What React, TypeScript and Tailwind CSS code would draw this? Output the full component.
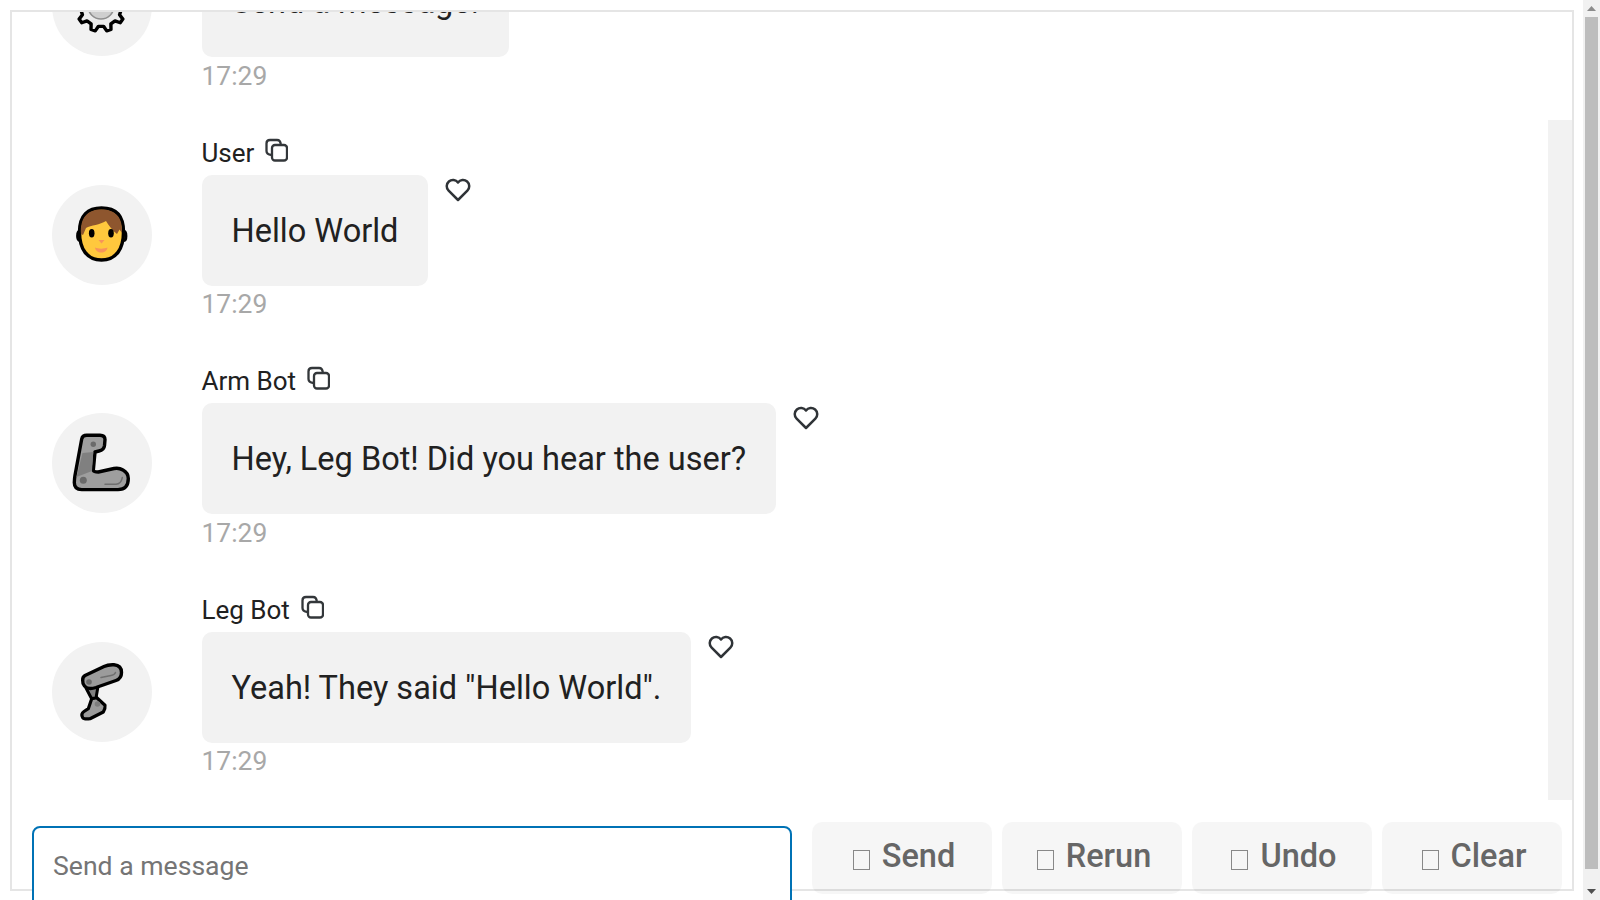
import React from "react";
import { TbHeart } from "react-icons/tb";

function gearPath(cx: number, cy: number, outer: number, inner: number, teeth: number) {
  const pts: string[] = [];
  const step = (Math.PI * 2) / teeth;
  for (let i = 0; i < teeth; i++) {
    const a = (i + 0.5) * step;
    const corners: [number, number][] = [
      [a - step * 0.3, inner],
      [a - step * 0.14, outer],
      [a + step * 0.14, outer],
      [a + step * 0.3, inner],
    ];
    corners.forEach(([t, r]) => {
      pts.push(`${(cx + Math.sin(t) * r).toFixed(2)} ${(cy + Math.cos(t) * r).toFixed(2)}`);
    });
  }
  return "M" + pts.join("L") + "Z";
}

function GearEmoji() {
  return (
    <svg width="60" height="60" viewBox="0 0 60 60">
      <path d={gearPath(29, 30, 25.5, 20.5, 10)} fill="#ececec" stroke="#000" strokeWidth="3.400" strokeLinejoin="round" />
      <circle cx="29" cy="30" r="13" fill="#cfcfcf" stroke="#8f8f8f" strokeWidth="1.500" />
    </svg>
  );
}

function BoyEmoji() {
  return (
    <svg width="60" height="60" viewBox="0 0 60 60">
      <ellipse cx="7.500" cy="31" rx="2" ry="4.500" fill="#FFC83D" stroke="#000" strokeWidth="2.800" />
      <ellipse cx="52" cy="31" rx="2" ry="4.500" fill="#FFC83D" stroke="#000" strokeWidth="2.800" />
      <path d="M7.500 27C7.500 10 16 3 29.500 3S51.500 10 51.500 27C51.500 44 44 55 29.500 55S7.500 44 7.500 27Z" fill="#FFC83D" stroke="#000" strokeWidth="3.400" />
      <path d="M9 29C8 12 16 4.500 29.500 4.500S51 12 50 28L47.500 24.500L45 29C41 26 37 21 34 16C28 20 19 20 14 23L11 30Z" fill="#8E562E" />
      <ellipse cx="19.700" cy="28.300" rx="2.800" ry="4.200" fill="#000" />
      <ellipse cx="39" cy="28.300" rx="2.800" ry="4.200" fill="#000" />
      <path d="M26.500 35H32.500L29.500 38.500Z" fill="#F7945A" />
      <path d="M23 42.500C26 44 32 44 35.500 42.500C35 46 32.500 47.500 29.300 47.500S23.500 46 23 42.500Z" fill="#F7945A" />
    </svg>
  );
}

function ArmEmoji() {
  return (
    <svg width="60" height="60" viewBox="0 0 60 60">
      <path
        d="M9.700 6Q10.500 2.300 14.700 2.300H28Q33 2.300 33 6.600L32.500 12.500Q32 17 27 18L23 19L21.300 37.300Q22 39 26.300 39L42 35.500Q47 34.500 51 37Q56.300 40 56.300 45.500Q56.300 56.600 46 56.600H9.700Q2.300 56.600 2.300 49.500Q2.500 45 3 42.300Z"
        fill="#9E9E9E"
        stroke="#000"
        strokeWidth="3.400"
        strokeLinejoin="round"
      />
      <path d="M10.500 20L21.300 19L20 38L4.500 44Z" fill="#808080" />
      <circle cx="11.300" cy="47.300" r="3.500" fill="#6A6A6A" />
      <circle cx="21.300" cy="11.300" r="2.700" fill="#6A6A6A" />
      <path d="M33 51.300H44Q49 51 50.300 44.600" fill="none" stroke="#6F6F6F" strokeWidth="1.500" strokeLinecap="round" />
    </svg>
  );
}

function LegEmoji() {
  return (
    <svg width="60" height="60" viewBox="0 0 60 60">
      <path
        d="M19.700 36.700L24 35L33 43.300Q33.500 47 31.300 50L18 56.700Q12 57.500 10.700 55.600Q8.500 52 12 49.500L16.300 46.700Z"
        fill="#9B9B9B"
        stroke="#000"
        strokeWidth="3.200"
        strokeLinejoin="round"
      />
      <path d="M14 26L26 24.500L24 36L19.500 36.500Z" fill="#808080" stroke="#000" strokeWidth="3" strokeLinejoin="round" />
      <path
        d="M10.700 18.300Q10.500 15 13 13.500L32 4.500Q36 2.500 42 2.800Q49.500 3.500 49.500 10.500Q49.500 16.500 44 18.500L24 25.500Q16 28 12.500 24Q10.500 22 10.700 18.300Z"
        fill="#9B9B9B"
        stroke="#000"
        strokeWidth="3.400"
        strokeLinejoin="round"
      />
      <circle cx="17" cy="20" r="2.800" fill="#6A6A6A" />
      <circle cx="25.500" cy="42" r="2.800" fill="#7D7D7D" />
      <path d="M29 15.500L39 13.500Q42.500 13 43.500 10.500" fill="none" stroke="#6F6F6F" strokeWidth="1.500" strokeLinecap="round" />
    </svg>
  );
}

function CopyIcon() {
  return (
    <svg width="24" height="24" viewBox="0 0 24 24" className="mb-[7px] ml-[10px]" fill="none" stroke="#33373a" strokeWidth="2.300">
      <rect x="8" y="7" width="15" height="15.500" rx="3" />
      <path d="M7.500 17Q2.500 16.500 2.500 13V5.500Q2.500 2 6 2H13Q16.500 2 16.800 6.500" />
    </svg>
  );
}

const messages = [
  { name: "System", text: "Send a message!", avatar: <GearEmoji /> },
  { name: "User", text: "Hello World", avatar: <BoyEmoji /> },
  { name: "Arm Bot", text: "Hey, Leg Bot! Did you hear the user?", avatar: <ArmEmoji /> },
  { name: "Leg Bot", text: 'Yeah! They said "Hello World".', avatar: <LegEmoji /> },
];

function Message({ name, text, avatar }: { name: string; text: string; avatar: React.ReactNode }) {
  return (
    <div className="mb-[35.500px] pl-[40px]">
      <div className="flex h-[44px] items-center pt-[1px] pl-[149.500px] text-[26px] text-[#212121]">
        <span>{name}</span>
        <CopyIcon />
      </div>
      <div className="flex items-end">
        <div className="mb-[1px] flex h-[100px] w-[100px] shrink-0 items-center justify-center rounded-full bg-[#f2f2f2]">
          {avatar}
        </div>
        <div className="ml-[49.500px] flex h-[111px] items-center rounded-[10px] bg-[#f2f2f2] px-[30px] pt-[2px] text-[32.500px] whitespace-nowrap text-[#212121]">
          {text}
        </div>
        <TbHeart className="ml-[14.500px] self-start text-[30px] text-[#2f3337]" />
      </div>
      <div className="flex h-[38px] items-center pt-[1px] pl-[149.500px] text-[26.400px] text-[#a8a8a8]">17:29</div>
    </div>
  );
}

function ActionButton({ label }: { label: string }) {
  return (
    <button className="flex h-[72px] w-[180px] items-center justify-center rounded-[10px] bg-black/[0.035] pb-[4px] pl-[4px] text-[32.500px] font-medium text-[#666666]">
      <span className="mt-[8px] mr-[12px] h-[20px] w-[17px] border border-[#888888]" />
      <span>{label}</span>
    </button>
  );
}

export default function App() {
  return (
    <div className="flex h-[900px] overflow-hidden bg-white font-[Roboto,sans-serif]">
      <div className="flex-1 pt-[10px] pl-[10px]">
        <div className="h-[881px] w-[1564px] border-2 border-[#e5e5e5]">
          <div className="flex h-[810px] overflow-hidden">
            <div className="-mt-[110px] flex-1">
              {messages.map((m) => (
                <Message key={m.text} name={m.name} text={m.text} avatar={m.avatar} />
              ))}
            </div>
            <div className="mt-[108px] h-[680px] w-[24px] bg-[#f2f2f2]" />
          </div>
          <div className="flex pl-[20px]">
            <div className="mt-[4px] mr-[20px] h-[100px] w-[760px] rounded-[8px] border-2 border-[#0072b5] bg-white px-[19px] pt-[22px] text-[26.600px] leading-[32px] text-[#757575]">
              Send a message
            </div>
            <div className="flex gap-[10px]">
              <ActionButton label="Send" />
              <ActionButton label="Rerun" />
              <ActionButton label="Undo" />
              <ActionButton label="Clear" />
            </div>
          </div>
        </div>
      </div>
      <div className="flex h-[900px] w-[17px] flex-col items-center bg-[#f1f1f1]">
        <div className="flex h-[17px] items-center justify-center">
          <svg width="9" height="5" viewBox="0 0 9 5">
            <path d="M4.500 0L9 5H0Z" fill="#8c8c8c" />
          </svg>
        </div>
        <div className="h-[852px] w-[13px] bg-[#bdbdbd]" />
        <div className="mt-[14px] flex h-[17px] items-center justify-center">
          <svg width="9" height="5" viewBox="0 0 9 5">
            <path d="M0 0H9L4.500 5Z" fill="#505050" />
          </svg>
        </div>
      </div>
    </div>
  );
}
